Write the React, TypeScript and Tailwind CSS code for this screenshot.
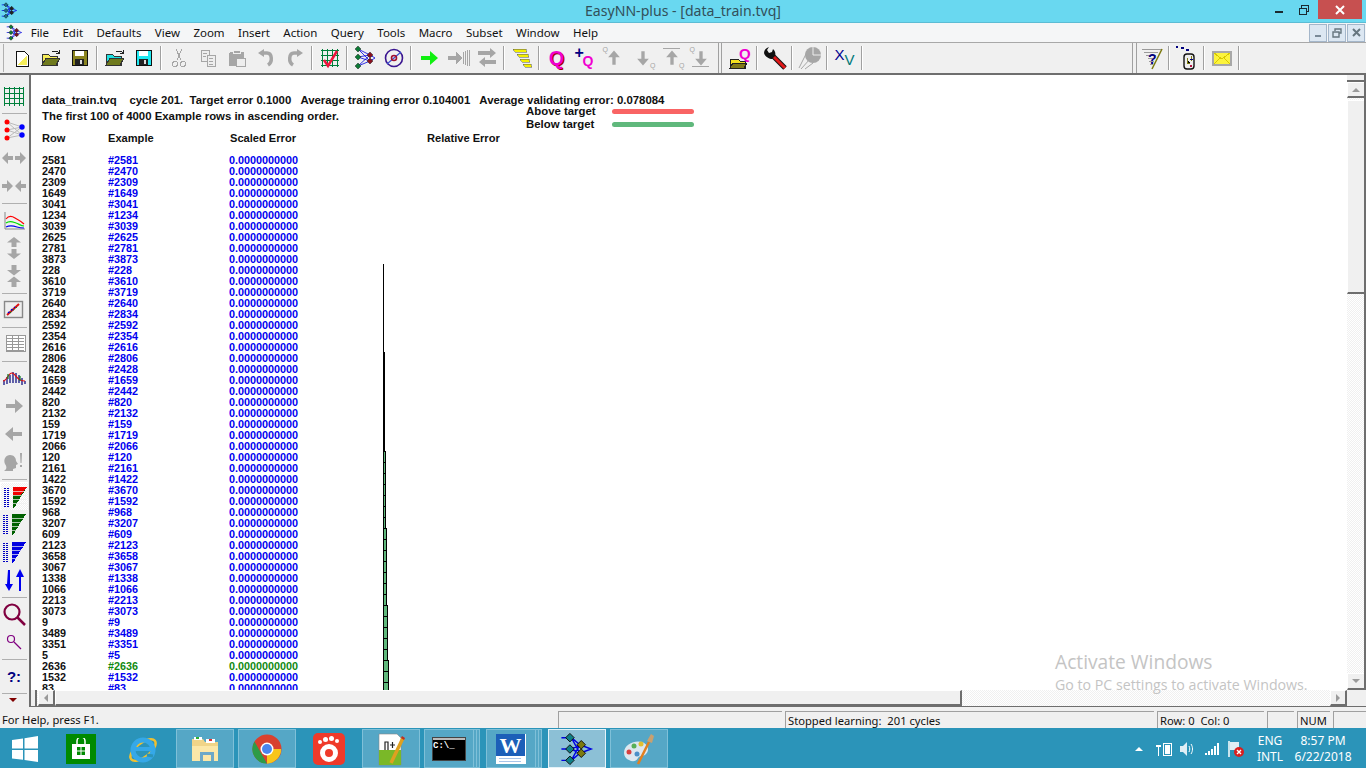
import type { ReactNode } from "react"

const GREY = "#a6a6a6"

const rows = [
  2581, 2470, 2309, 1649, 3041, 1234, 3039, 2625, 2781, 3873, 228, 3610, 3719, 2640, 2834, 2592, 2354, 2616, 2806, 2428,
  1659, 2442, 820, 2132, 159, 1719, 2066, 120, 2161, 1422, 3670, 1592, 968, 3207, 609, 2123, 3658, 3067, 1338, 1066,
  2213, 3073, 9, 3489, 3351, 5, 2636, 1532, 83,
]

const menus = ["File", "Edit", "Defaults", "View", "Zoom", "Insert", "Action", "Query", "Tools", "Macro", "Subset", "Window", "Help"]

const Svg = ({ children, s = 24 }: { children: ReactNode; s?: number }) => (
  <svg width={s} height={s} viewBox="0 0 24 24" shapeRendering="crispEdges">
    {children}
  </svg>
)

// little neural net, used in the title bar, menu bar and taskbar
const NetLogo = ({ size = 18, a = "#0f7f86", b = "#7d7a10" }: { size?: number; a?: string; b?: string }) => (
  <svg width={size} height={size} viewBox="0 0 24 24">
    <g stroke="#0000e0" strokeWidth="1" fill="none">
      <path d="M1 4h7M1 12h7M1 20h7M8 4l6 5M8 4l6 11M8 12l6-3M8 12l6 3M8 20l6-5M8 20l6-11M14 9l8 3-8 3" />
    </g>
    <g stroke="#111" strokeWidth="0.7">
      <path d="M7 1l3 3-3 3-3-3z" fill={a} />
      <path d="M7 9l3 3-3 3-3-3z" fill={a} />
      <path d="M7 17l3 3-3 3-3-3z" fill={a} />
      <path d="M15 6l3 3-3 3-3-3z" fill={b} />
      <path d="M15 12l3 3-3 3-3-3z" fill={b} />
    </g>
  </svg>
)

const NewDoc = () => (
  <Svg>
    <path d="M6 5h8l4 4v11H6z" fill="#fff" stroke="#111" />
    <path d="M7 19l10-9v9z" fill="#f5ee5a" />
  </Svg>
)
const Folder = ({ c }: { c: string }) => (
  <Svg>
    <path d="M3 8h6l2 2h7v9H3z" fill={c} stroke="#333" />
    <path d="M3 19l4-7h14l-4 7z" fill="#6f7a1e" stroke="#333" />
    <path d="M13 5h5l2 2M20 4v3h-3" fill="none" stroke="#222" />
  </Svg>
)
const Floppy = ({ c }: { c: string }) => (
  <Svg>
    <rect x="4" y="4" width="15" height="15" fill={c} stroke="#111" />
    <rect x="7" y="5" width="9" height="5" fill="#fff" />
    <rect x="7" y="13" width="9" height="6" fill="#222" />
    <rect x="12" y="14" width="2" height="4" fill="#ddd" />
  </Svg>
)
const Cut = () => (
  <Svg>
    <path d="M9 3l5 11M15 3l-5 11" stroke={GREY} fill="none" />
    <circle cx="8" cy="18" r="2.5" fill="none" stroke={GREY} />
    <circle cx="16" cy="18" r="2.5" fill="none" stroke={GREY} />
  </Svg>
)
const Copy = () => (
  <Svg>
    <path d="M5 4h8v11H5z" fill="#eee" stroke={GREY} />
    <path d="M11 9h8v11h-8z" fill="#eee" stroke={GREY} />
    <path d="M7 7h4M7 10h3M13 12h4M13 15h4M13 18h4" stroke={GREY} />
  </Svg>
)
const Paste = () => (
  <Svg>
    <rect x="4" y="6" width="15" height="14" rx="2" fill={GREY} />
    <rect x="8" y="4" width="7" height="3" fill={GREY} stroke="#eee" />
    <path d="M11 12h9v8h-9z" fill="#eee" stroke={GREY} />
  </Svg>
)
const Undo = ({ flip }: { flip?: boolean }) => (
  <svg width="24" height="24" viewBox="0 0 24 24" style={flip ? { transform: "scaleX(-1)" } : undefined}>
    <path d="M9 7h4c5 0 6 9 1 12" fill="none" stroke={GREY} strokeWidth="3.5" />
    <path d="M4 7l6-4v8z" fill={GREY} />
  </svg>
)
const GridCheck = () => (
  <Svg>
    <path d="M3 4h18M3 9h18M3 14h18M3 19h18M4 3v18M9 3v18M14 3v18M19 3v18" stroke="#00803c" fill="none" />
    <path d="M6 14l4 6 9-15" stroke="#f0143c" strokeWidth="2.5" fill="none" shapeRendering="auto" />
  </Svg>
)
const NetTool = () => (
  <svg width="24" height="24" viewBox="0 0 24 24">
    <path d="M5 3l12 6M5 3l12 12M5 11l12-2M5 11l12 4M5 20l12-5M5 20l12-11M17 9l5 3-5 3" stroke="#0000e0" fill="none" strokeWidth="0.8" />
    <path d="M5 0l3 3-3 3-3-3zM5 8l3 3-3 3-3-3zM5 17l3 3-3 3-3-3z" fill="#0d7a36" stroke="#222" strokeWidth="0.5" />
    <path d="M17 6l3 3-3 3-3-3zM17 12l3 3-3 3-3-3z" fill="#8a1020" stroke="#222" strokeWidth="0.5" />
  </svg>
)
const Compass = () => (
  <svg width="24" height="24" viewBox="0 0 24 24">
    <circle cx="12" cy="12" r="8.5" fill="none" stroke="#3a1590" strokeWidth="1.6" />
    <path d="M5 18L19 6" stroke="#3a50d0" strokeWidth="1.2" />
    <circle cx="12" cy="12" r="2.5" fill="none" stroke="#a01030" strokeWidth="1.6" />
  </svg>
)
const Arrow = ({ c = GREY, dir = 0, s = 24 }: { c?: string; dir?: number; s?: number }) => (
  <svg width={s} height={s} viewBox="0 0 24 24" style={{ transform: `rotate(${dir}deg)` }}>
    <path d="M4 10h9V5l8 7-8 7v-5H4z" fill={c} />
  </svg>
)
const ArrowLines = () => (
  <Svg>
    <path d="M2 10h8V6l6 6-6 6v-4H2z" fill={GREY} />
    <path d="M17 6v12M19 5v14M21 4v16M23 4v16" stroke={GREY} />
  </Svg>
)
const Swap = () => (
  <svg width="24" height="24" viewBox="0 0 24 24">
    <path d="M3 5h12V2l6 5-6 5V9H3zM21 14H10v-3l-6 5 6 5v-3h11z" fill={GREY} />
  </svg>
)
const Stairs = () => (
  <Svg>
    <path d="M3 3h13l1 3H5zM7 8h11l1 3H9zM10 13h9l1 3h-8zM13 18h8l1 3h-7z" fill="#f4f000" stroke="#555" strokeWidth="0.5" />
  </Svg>
)
const Q = () => (
  <div className="font-['Liberation_Sans',sans-serif] text-[20px] font-bold leading-none text-[#f000d0] [text-shadow:1px_1px_0_#900]">Q</div>
)
const PlusQ = () => (
  <div className="relative h-6 w-6 font-['Liberation_Sans',sans-serif] font-bold">
    <span className="absolute left-[1px] top-[-3px] text-[16px] leading-[20px] text-[#000080]">+</span>
    <span className="absolute left-[9px] top-[7px] text-[14px] leading-[16px] text-[#f000d0]">Q</span>
  </div>
)
const QArrow = ({ up, bar, qTop }: { up?: boolean; bar?: boolean; qTop?: boolean }) => (
  <div className="relative h-6 w-6">
    {bar && <div className={`absolute left-[2px] h-[1px] w-[17px] bg-[#a6a6a6] ${up ? "top-[2px]" : "top-[20px]"}`} />}
    <div className="absolute left-[1px] top-[2px]">
      <Arrow dir={up ? -90 : 90} s={20} />
    </div>
    <span className={`absolute font-['Liberation_Sans',sans-serif] text-[7px] leading-[8px] text-[#a6a6a6] ${qTop ? "left-0 top-0" : "bottom-0 right-0"}`}>Q</span>
  </div>
)
const OpenQ = () => (
  <Svg>
    <path d="M2 13h8l2 2h5v7H2z" fill="#f4e020" stroke="#222" />
    <path d="M2 22l3-5h14l-3 5z" fill="#807818" stroke="#222" />
    <text x="11" y="13" fontFamily="Liberation Sans" fontWeight="bold" fontSize="15" fill="#f000d0">Q</text>
  </Svg>
)
const Wrench = () => (
  <svg width="24" height="24" viewBox="0 0 24 24">
    <path d="M9 9l13 13" stroke="#111" strokeWidth="5" />
    <path d="M9 9l13 13" stroke="#e01818" strokeWidth="3" />
    <path d="M1 7c0-3 2-5 5-6L4 4l2 3 3-1 1-3c2 2 3 4 2 7l-3 3C7 13 2 11 1 7z" fill="#111" />
  </svg>
)
const Pie = () => (
  <svg width="24" height="24" viewBox="0 0 24 24">
    <circle cx="15" cy="9" r="8" fill={GREY} />
    <path d="M15 9V1M15 9h8" stroke="#eee" />
    <path d="M1 22L10 4M3 23L12 13M7 23L15 17" stroke={GREY} fill="none" />
  </svg>
)
const XV = () => (
  <div className="flex font-['Liberation_Sans',sans-serif] text-[15px] leading-none">
    <span className="mt-[-3px] text-[#000090]">X</span>
    <span className="mt-[2px] text-[#007878]">V</span>
  </div>
)
const HelpFilter = () => (
  <Svg>
    <path d="M2 3h20M4 6h14M6 9h10M8 12h6M9 15h5M10 18h3" stroke="#9a9a9a" />
    <path d="M22 3L12 23" stroke="#7d7a10" strokeWidth="1.5" shapeRendering="auto" />
    <text x="8" y="18" fontFamily="Liberation Sans" fontWeight="bold" fontSize="14" fill="#000080">?</text>
  </Svg>
)
const Clip = () => (
  <Svg>
    <path d="M1 1h2M6 2h3M11 4h3" stroke="#000080" strokeWidth="2" />
    <rect x="9" y="8" width="10" height="15" rx="3" fill="#eee" stroke="#111" strokeWidth="1.4" shapeRendering="auto" />
    <path d="M12 12v5h3M16 10v5" stroke="#7d7a10" />
    <path d="M15 13h3" stroke="#000080" />
    <rect x="15" y="19" width="2" height="2" fill="#b01040" />
  </Svg>
)
const Mail = () => (
  <Svg>
    <rect x="3" y="6" width="18" height="13" fill="#fcf43c" stroke="#a8a8a8" strokeWidth="1.4" />
    <path d="M4 7l8 6 8-6M4 18l6-6M20 18l-6-6" stroke="#d8c800" fill="none" />
  </Svg>
)

const Grid = () => (
  <Svg>
    <path d="M4 4h20M4 9h20M4 14h20M4 19h20M4 3v19M9 3v19M14 3v19M19 3v19M23 3v19" stroke="#00803c" fill="none" transform="translate(-2 0)" />
  </Svg>
)
const NetRB = () => (
  <svg width="24" height="24" viewBox="0 0 24 24">
    <path d="M5 4l15 5M5 4l15 13M5 12l15-3M5 12l15 5M5 20l15-3M5 20l15-11" stroke="#bbb" fill="none" />
    <circle cx="5" cy="4" r="2.5" fill="#f00" />
    <circle cx="5" cy="12" r="2.5" fill="#f00" />
    <circle cx="5" cy="20" r="2.5" fill="#f00" />
    <circle cx="20" cy="9" r="2.7" fill="#00f" />
    <circle cx="20" cy="17" r="2.7" fill="#00f" />
  </svg>
)
const HArrows = ({ inward }: { inward?: boolean }) => (
  <svg width="24" height="24" viewBox="0 0 24 24">
    {inward ? (
      <path d="M0 10h5V6l6 6-6 6v-4H0zM24 10h-5V6l-6 6 6 6v-4h5z" fill={GREY} />
    ) : (
      <path d="M11 10H6V6l-6 6 6 6v-4h5zM13 10h5V6l6 6-6 6v-4h-5z" fill={GREY} />
    )}
  </svg>
)
const VArrows = ({ inward }: { inward?: boolean }) => (
  <svg width="24" height="24" viewBox="0 0 24 24">
    {inward ? (
      <path d="M9.500 1h5v5H19l-7 5.500L5 6h4.500zM9.500 23h5v-5H19l-7-5.500L5 18h4.500z" fill={GREY} />
    ) : (
      <path d="M9.500 11h5V6.500H19L12 1 5 6.500h4.500zM9.500 13h5v4.500H19L12 23l-7-5.500h4.500z" fill={GREY} />
    )}
  </svg>
)
const Graph = () => (
  <svg width="24" height="24" viewBox="0 0 24 24">
    <path d="M3 4v17h20" stroke="#888" fill="none" />
    <path d="M4 11c3-4 6-3 9-1s6 3 9 6" stroke="#f00" strokeWidth="1.2" fill="none" />
    <path d="M4 15c4-3 7-1 10 0s5 3 8 3" stroke="#0d0" strokeWidth="1.2" fill="none" />
    <path d="M4 19c4-2 8-1 11 0s4 1 7 1" stroke="#00e" strokeWidth="1.2" fill="none" />
  </svg>
)
const Scatter = () => (
  <svg width="24" height="24" viewBox="0 0 24 24">
    <rect x="2.5" y="3.5" width="18" height="16" fill="#eee" stroke="#888" strokeWidth="1.4" />
    <path d="M5 17l12-11" stroke="#e01010" strokeWidth="2" />
    <path d="M6 15l7-6" stroke="#0000d0" strokeWidth="1.4" strokeDasharray="2 2" />
    <path d="M8 15l7-6" stroke="#008020" strokeWidth="1" strokeDasharray="2 2" />
  </svg>
)
const TableIcon = () => (
  <Svg>
    <rect x="4" y="3" width="19" height="16" fill="#fff" stroke="#999" />
    <path d="M5 6h17M5 9h17M5 12h17M5 15h17M5 18h17M10 3v16M16 3v16" stroke="#999" />
  </Svg>
)
const Hist = () => (
  <svg width="24" height="24" viewBox="0 0 24 24">
    <path d="M2 14v5M5 11v7M8 9v8M11 6v11M14 7v10M17 9v8M20 12v7M23 15v3" stroke="#00007a" strokeWidth="1.2" />
    <path d="M1 15c4 0 5-8 9-8s4 8 13 8" stroke="#e01010" strokeWidth="1.2" fill="none" />
    <path d="M6 8v5M18 10v5" stroke="#0a7a20" strokeWidth="1.2" />
  </svg>
)
const Head = () => (
  <svg width="24" height="24" viewBox="0 0 24 24">
    <path d="M2 21c3-2 3-4 1-7-2-5 1-9 5-9s6 3 6 6l2 3-2 1v3l-3 1v2z" fill={GREY} />
    <path d="M18 3h2l-.5 10h-1zM18 15h2v2h-2z" fill={GREY} />
  </svg>
)
const dots = "M1 3h6M1 5h6M1 7h6M1 9h6M1 11h6M1 13h6M1 15h6M1 17h6M1 19h6M1 21h6"
const gaps = "M10 6h14M10 10h14M10 14h14M10 18h14"
const Bars = ({ c, top }: { c: string; top?: string }) => (
  <Svg>
    <path d={dots} stroke="#0000c0" strokeDasharray="2 1" />
    <path d="M10 2h14L11 23h-1z" fill={c} />
    {top && <path d="M10 2h14l-6 8h-8z" fill={top} />}
    <path d={gaps} stroke="#f0f0f0" strokeOpacity="0.7" />
  </Svg>
)
const UpDown = () => (
  <svg width="24" height="24" viewBox="0 0 24 24">
    <path d="M6 2h2v14h3l-4 7-4-7h2zM17 9h2v14h-2zM18 1l4 8h-8z" fill="#0000f0" />
  </svg>
)
const Lens = ({ big }: { big?: boolean }) => (
  <svg width="24" height="24" viewBox="0 0 24 24">
    {big ? (
      <>
        <circle cx="10" cy="10" r="7.5" fill="none" stroke="#800040" strokeWidth="2.2" />
        <path d="M15 15l8 8" stroke="#800040" strokeWidth="2.5" />
      </>
    ) : (
      <>
        <circle cx="9" cy="9" r="3.5" fill="none" stroke="#800080" strokeWidth="1.2" />
        <path d="M12 12l7 7" stroke="#800080" strokeWidth="1.2" />
      </>
    )}
  </svg>
)
const HelpColon = () => (
  <div className="font-['Liberation_Sans',sans-serif] text-[15px] font-bold leading-none text-[#000080]">?:</div>
)

const topA: (ReactNode | "|")[] = [
  <NewDoc />, <Folder c="#f6ec58" />, <Floppy c="#8a8420" />, "|",
  <Folder c="#20e0e0" />, <Floppy c="#20e8f0" />, "|",
  <Cut />, <Copy />, <Paste />, <Undo />, <Undo flip />, "|",
  <GridCheck />, "|",
  <NetTool />, <Compass />, "|",
  <Arrow c="#10f010" />, <ArrowLines />, <Swap />, "|",
  <Stairs />, "|",
  <Q />, <PlusQ />, <QArrow up qTop />, <QArrow />, <QArrow up bar />, <QArrow bar qTop />,
]
const topB: (ReactNode | "|")[] = [<OpenQ />, "|", <Wrench />, "|", <Pie />, "|", <XV />, "|"]
const topC: (ReactNode | "|")[] = [<HelpFilter />, "|", <Clip />, "|", <Mail />, "|"]

const left: (ReactNode | "|")[] = [
  <Grid />, "|", <NetRB />, <HArrows />, <HArrows inward />, "|",
  <Graph />, <VArrows />, <VArrows inward />, "|",
  <Scatter />, "|", <TableIcon />, "|",
  <Hist />, <Arrow />, <Arrow dir={180} />, <Head />, "|",
  "active", <Bars c="#006000" />, <Bars c="#0000e0" />, <UpDown />, "|",
  <Lens big />, <Lens />, "|", <HelpColon />, "|",
]

const TopTools = ({ items }: { items: (ReactNode | "|")[] }) => (
  <>
    {items.map((it, i) =>
      it === "|" ? (
        <div key={i} className="flex h-[30px] w-[6px] items-center justify-center">
          <div className="h-[24px] w-[2px] border-l border-[#a0a0a0] bg-white" />
        </div>
      ) : (
        <div key={i} className="flex h-[30px] w-[29px] items-center justify-center">
          {it}
        </div>
      ),
    )}
  </>
)

const Thumb = ({ className = "", children }: { className?: string; children?: ReactNode }) => (
  <div className={`flex items-center justify-center border-b-2 border-l border-r-2 border-t border-b-[#6e6e6e] border-l-white border-r-[#6e6e6e] border-t-white bg-[#f0f0f0] ${className}`}>
    {children}
  </div>
)

const Panel = ({ className, children }: { className: string; children?: ReactNode }) => (
  <div className={`h-full whitespace-pre border-l border-t border-[#a0a0a0] pl-[2px] ${className}`}>{children}</div>
)

const TaskBtn = ({ w = "w-[58px]", active, stack, children }: { w?: string; active?: boolean; stack?: boolean; children: ReactNode }) => (
  <div className="flex h-[39px]">
    <div className={`flex h-full items-center justify-center border ${w} ${active ? "border-[#e4f2f8] bg-[#8cc0d6]" : "border-[#7fc0d8] bg-[#55a7c6]"}`}>
      {children}
    </div>
    {stack && <div className="h-full w-[3px] border-y border-r border-[#7fc0d8] bg-[#55a7c6]" />}
    {stack && <div className="h-full w-[3px] border-y border-r border-[#7fc0d8] bg-[#55a7c6]" />}
  </div>
)

export default function App() {
  return (
    <div className="relative flex h-[768px] w-[1366px] flex-col overflow-hidden bg-[#f0f0f0] font-['Noto_Sans',sans-serif]">
      {/* title bar */}
      <div className="relative flex h-[23px] shrink-0 items-center justify-center border-b border-[#5cbcd4] bg-[#69d8f0] text-[14.1px] text-[#32505a]">
        <div className="absolute left-[1px] top-[2px]">
          <NetLogo size={17} a="#1a6f8a" b="#222" />
        </div>
        EasyNN-plus - [data_train.tvq]
        <div className="absolute right-[4px] top-0 flex h-[19px] items-start">
          <div className="mr-[16px] mt-[11px] h-[2px] w-[8px] bg-[#1a2a30]" />
          <div className="relative mr-[9px] mt-[5px] h-[10px] w-[10px]">
            <div className="absolute left-[2px] top-0 h-[7px] w-[8px] border border-[#1a2a30]" />
            <div className="absolute bottom-0 left-0 h-[7px] w-[8px] border border-[#1a2a30] bg-[#69d8f0]" />
          </div>
          <div className="flex h-[19px] w-[44px] items-center justify-center bg-[#c75050]">
            <svg width="10" height="10" viewBox="0 0 10 10">
              <path d="M1 1l8 8M9 1l-8 8" stroke="#fff" strokeWidth="2" />
            </svg>
          </div>
        </div>
      </div>

      {/* menu bar */}
      <div className="flex h-[20px] shrink-0 items-center border-b border-[#a8a8a8] bg-[#f5f6f7] text-[11.5px] text-[#111]">
        <div className="ml-[6px] mr-[1px]">
          <NetLogo size={17} a="#0d7a36" b="#7a1020" />
        </div>
        {menus.map((m) => (
          <span key={m} className="px-[6.7px]">
            {m}
          </span>
        ))}
        <div className="ml-auto mr-[1px] flex gap-[1px]">
          {["min", "restore", "close"].map((b) => (
            <div key={b} className="flex h-[18px] w-[18px] items-center justify-center border border-[#a4b6ca] bg-[#dce7f2]">
              {b === "min" && <div className="mt-[6px] h-[2px] w-[6px] bg-[#7a8a98]" />}
              {b === "restore" && (
                <svg width="10" height="10" viewBox="0 0 10 10">
                  <path d="M3 3V1h6v4H7M1 4h6v5H1z" fill="none" stroke="#66767f" strokeWidth="1.4" />
                </svg>
              )}
              {b === "close" && (
                <svg width="9" height="9" viewBox="0 0 9 9">
                  <path d="M1 1l7 7M8 1L1 8" stroke="#66767f" strokeWidth="2" />
                </svg>
              )}
            </div>
          ))}
        </div>
      </div>

      {/* main toolbar */}
      <div className="flex h-[32px] shrink-0 items-center border-b-2 border-[#6e6e6e] bg-[#f0f0f0] pl-[3px]">
        <div className="mr-[3px] h-[28px] w-[1px] bg-[#b0b0b0]" />
        <TopTools items={topA} />
        <div className="ml-[1px] mr-[2px] h-[30px] w-[2px] border-r border-[#a0a0a0]" />
        <div className="mr-[2px] h-[30px] w-[2px] border-l border-[#a0a0a0]" />
        <TopTools items={topB} />
        <div className="flex-1" />
        <div className="mr-[3px] h-[30px] w-[1px] bg-[#a0a0a0]" />
        <div className="h-[30px] w-[1px] bg-[#a0a0a0]" />
        <TopTools items={topC} />
        <div className="w-[124px]" />
      </div>

      {/* client area */}
      <div className="flex h-[632px] shrink-0">
        <div className="flex w-[31px] shrink-0 flex-col overflow-hidden border-r-2 border-[#6e6e6e] pt-[7px]">
          {left.map((it, i) =>
            it === "|" ? (
              <div key={i} className="flex h-[6px] shrink-0 items-center px-[2px]">
                <div className="h-[1px] w-full bg-[#b0b0b0]" />
              </div>
            ) : it === "active" ? (
              <div key={i} className="flex h-[28px] w-[28px] shrink-0 items-center justify-center border-l border-t border-white bg-[repeating-conic-gradient(#f0f0f0_0_25%,#fff_0_50%)] bg-[length:2px_2px]">
                <Bars c="#006000" top="#f00000" />
              </div>
            ) : (
              <div key={i} className="flex h-[28px] w-[28px] shrink-0 items-center justify-center">
                {it}
              </div>
            ),
          )}
          <div className="mt-[2px] flex justify-center pr-[3px]">
            <div className="h-0 w-0 border-x-[4px] border-t-[4px] border-x-transparent border-t-[#800000]" />
          </div>
        </div>

        <div className="flex min-w-0 flex-1 flex-col">
          <div className="flex h-[615px] min-h-0">
            {/* report */}
            <div className="min-w-0 flex-1 overflow-hidden bg-white pl-[11px] pt-[19px] font-['Liberation_Sans',sans-serif] text-[11.4px] font-bold leading-[11px] text-[#111]">
              <div className="flex h-[12px] items-center whitespace-pre">data_train.tvq{"    "}cycle 201.{"  "}Target error 0.1000{"   "}Average training error 0.104001{"   "}Average validating error: 0.078084</div>
              <div className="flex h-[26px]">
                <div className="w-[484px] pt-[5px]">The first 100 of 4000 Example rows in ascending order.</div>
                <div className="flex w-[168px] flex-col gap-[2px]">
                  <div className="flex h-[11px] items-center justify-between">
                    Above target
                    <div className="h-[5px] w-[82px] rounded-full bg-[#f96464]" />
                  </div>
                  <div className="flex h-[11px] items-center justify-between">
                    Below target
                    <div className="h-[5px] w-[82px] rounded-full bg-[#60b87c]" />
                  </div>
                </div>
              </div>
              <div className="grid h-[23px] grid-cols-[66px_122px_197px_1fr] pt-[1px] text-[11.1px]">
                <div>Row</div>
                <div>Example</div>
                <div>Scaled Error</div>
                <div>Relative Error</div>
              </div>
              {rows.map((r, i) => {
                const green = r === 2636
                const w = i < 10 ? 0 : i < 18 ? 1 : i < 27 ? 2 : i < 34 ? 3 : i < 41 ? 4 : i < 46 ? 5 : 6
                return (
                  <div key={r} className="grid h-[11px] grid-cols-[66px_121px_154px_1fr] text-[10.8px]">
                    <div>{r}</div>
                    <div className={green ? "text-[#108a10]" : "text-[#0000f0]"}>#{r}</div>
                    <div className={green ? "text-[#108a10]" : "text-[#0000f0]"}>0.0000000000</div>
                    <div className="h-[11px]">
                      {w > 0 &&
                        (w < 3 ? (
                          <div className="-mt-[1px] h-full bg-black" style={{ width: w }} />
                        ) : (
                          <div className="-mt-[1px] h-full border-x border-t border-black bg-[#60b87c]" style={{ width: w }} />
                        ))}
                    </div>
                  </div>
                )
              })}
            </div>
            {/* vertical scroll bar */}
            <div className="flex w-[19px] shrink-0 flex-col border-r-2 border-[#6e6e6e] bg-[repeating-conic-gradient(#f0f0f0_0_25%,#fff_0_50%)] bg-[length:2px_2px]">
              <div className="h-[7px] shrink-0 border-b-2 border-[#6e6e6e] bg-[#f0f0f0]" />
              <Thumb className="h-[16px] shrink-0 !border-r-0">
                <div className="h-0 w-0 border-x-[4px] border-b-[4px] border-x-transparent border-b-[#9a9a9a]" />
              </Thumb>
              <div className="h-[2px] shrink-0" />
              <Thumb className="h-[194px] shrink-0 !border-r-0" />
              <div className="flex-1" />
              <Thumb className="h-[17px] shrink-0 !border-r-0">
                <div className="h-0 w-0 border-x-[4px] border-t-[4px] border-x-transparent border-t-[#9a9a9a]" />
              </Thumb>
            </div>
          </div>
          {/* horizontal scroll bar */}
          <div className="flex h-[16px] shrink-0 bg-[repeating-conic-gradient(#f0f0f0_0_25%,#fff_0_50%)] bg-[length:2px_2px]">
            <div className="w-[6px] shrink-0 border-r-2 border-[#6e6e6e] bg-[#f0f0f0]" />
            <div className="w-[1px] shrink-0" />
            <Thumb className="w-[17px] shrink-0">
              <div className="h-0 w-0 border-y-[4px] border-r-[4px] border-y-transparent border-r-[#9a9a9a]" />
            </Thumb>
            <Thumb className="w-[907px] shrink-0" />
            <div className="flex-1" />
            <Thumb className="w-[17px] shrink-0">
              <div className="h-0 w-0 border-y-[4px] border-l-[4px] border-y-transparent border-l-[#9a9a9a]" />
            </Thumb>
            <div className="w-[19px] shrink-0 bg-[#f0f0f0]" />
          </div>
          <div className="h-[1px] shrink-0 bg-[#6e6e6e]" />
        </div>
      </div>

      {/* status bar */}
      <div className="flex h-[21px] shrink-0 items-end bg-[#f0f0f0] text-[11.2px] leading-[17px] text-[#111]">
        <div className="flex h-[17px] w-full items-start gap-[3px]">
          <div className="h-full w-[555px] pl-[2px]">For Help, press F1.</div>
          <Panel className="w-[224px]" />
          <Panel className="w-[369px]">Stopped learning:{"  "}201 cycles</Panel>
          <Panel className="w-[107px]">Row: 0{"  "}Col: 0</Panel>
          <Panel className="w-[27px]" />
          <Panel className="w-[33px]">NUM</Panel>
          <Panel className="flex-1" />
        </div>
      </div>

      {/* taskbar */}
      <div className="flex h-[40px] shrink-0 items-end bg-[#2b94b9]">
        <div className="flex h-[39px] w-[66px] items-center pl-[12px]">
          <svg width="26" height="26" viewBox="0 0 26 26">
            <path d="M0 4l11-1.500V12.500H0zM12.500 2.300L26 0v12.500H12.500zM0 14h11v9.800L0 22.500zM12.500 14H26v12l-13.500-2z" fill="#fff" />
          </svg>
        </div>
        <div className="flex h-[39px] w-[30px] items-center justify-center">
          <div className="flex h-[30px] w-[30px] items-center justify-center bg-[#008a00]">
            <svg width="20" height="22" viewBox="0 0 20 22">
              <path d="M6 6V3a4 4 0 018 0v3" fill="none" stroke="#fff" strokeWidth="1.5" />
              <path d="M1 6h18v15H1z" fill="#fff" />
              <path d="M6 9h3.500v3.500H6zM10.500 9H14v3.500h-3.500zM6 13.500h3.500V17H6zM10.500 13.500H14V17h-3.500z" fill="#008a00" />
            </svg>
          </div>
        </div>
        <div className="flex h-[39px] w-[80px] items-center justify-center pl-[14px]">
          <svg width="32" height="32" viewBox="0 0 32 32">
            <ellipse cx="16" cy="17" rx="15" ry="7" fill="none" stroke="#f0c030" strokeWidth="2.5" transform="rotate(-38 16 17)" />
            <circle cx="16" cy="17" r="10" fill="none" stroke="#35a8e8" strokeWidth="5" />
            <path d="M8 16h17" stroke="#35a8e8" strokeWidth="4" />
            <path d="M20 22l6 1" stroke="#2b94b9" strokeWidth="3" />
          </svg>
        </div>
        <div className="mr-[4px]">
          <TaskBtn>
            <svg width="30" height="30" viewBox="0 0 30 30">
              <path d="M2 5h11l2 3h13v19H2z" fill="#f0d488" />
              <path d="M4 3h8v3H4zM16 5h9v4h-9z" fill="#fff" />
              <path d="M6 3h3v2H6z" fill="#30b030" />
              <path d="M19 5h3v2h-3z" fill="#e03030" />
              <path d="M2 12h26v15H2z" fill="#fbe7a8" />
              <path d="M10 18h14v9h-3v-6h-8v6h-3z" fill="#6ca8c8" />
            </svg>
          </TaskBtn>
        </div>
        <TaskBtn>
          <svg width="30" height="30" viewBox="0 0 30 30">
            <circle cx="15" cy="15" r="14.500" fill="#d8412f" />
            <path d="M15 15h14a14.500 14.500 0 01-14 14.500z" fill="#f7c51a" />
            <path d="M15 29.500A14.500 14.500 0 012.500 7.500L9 19z" fill="#2e9b47" />
            <path d="M15 29.500l7-11 7-3.500a14.500 14.500 0 01-14 14.500z" fill="#f7c51a" />
            <circle cx="15" cy="15" r="6.500" fill="#fff" />
            <circle cx="15" cy="15" r="5" fill="#4a85ee" />
          </svg>
        </TaskBtn>
        <div className="flex h-[39px] w-[66px] items-center justify-center">
          <div className="relative h-[32px] w-[32px] rounded-[5px] bg-[#ef3a2a]">
            <div className="absolute left-[7px] top-[11px] h-[18px] w-[18px] rounded-full border-[5px] border-white bg-[#ef3a2a]" />
            <div className="absolute left-[5px] top-[7px] h-[4px] w-[4px] rounded-full bg-white" />
            <div className="absolute left-[10px] top-[4px] h-[5px] w-[5px] rounded-full bg-white" />
            <div className="absolute left-[16px] top-[3px] h-[5px] w-[5px] rounded-full bg-white" />
            <div className="absolute left-[22px] top-[6px] h-[4px] w-[4px] rounded-full bg-white" />
          </div>
        </div>
        <div className="mr-[4px]">
          <TaskBtn>
            <svg width="32" height="34" viewBox="0 0 32 34">
              <path d="M4 2h18l4 4v27H4z" fill="#fff" stroke="#888" strokeWidth="0.6" />
              <path d="M4 18h22v15H4z" fill="#7ab828" />
              <path d="M10 18v-8h3v8M15 13h5M17.500 10v6" stroke="#222" fill="none" strokeWidth="1.2" />
              <path d="M16 31L28 6" stroke="#e0a020" strokeWidth="3.500" />
              <path d="M27 4l3 2-1 2-3-2z" fill="#c03020" />
            </svg>
          </TaskBtn>
        </div>
        <div className="mr-[6px]">
          <TaskBtn w="w-[50px]" stack>
            <div className="relative h-[24px] w-[34px] border border-[#444] bg-black font-['Liberation_Mono',monospace] text-[9px] font-bold leading-[12px] text-white">
              <div className="h-[2px] bg-[#bbb]" />
              C:\_
            </div>
          </TaskBtn>
        </div>
        <div className="mr-[6px]">
          <TaskBtn w="w-[50px]" stack>
            <div className="relative h-[30px] w-[30px] bg-white">
              <div className="absolute left-0 top-0 h-[22px] w-[29px] bg-[#1c5fb8] text-center font-['Liberation_Serif',serif] text-[22px] font-bold leading-[24px] text-white">W</div>
              <div className="absolute bottom-[2px] left-[3px] h-[1px] w-[22px] bg-[#a8c4e8]" />
              <div className="absolute bottom-[5px] left-[3px] h-[1px] w-[22px] bg-[#a8c4e8]" />
            </div>
          </TaskBtn>
        </div>
        <div className="mr-[4px]">
          <TaskBtn active>
            <NetLogo size={34} />
          </TaskBtn>
        </div>
        <TaskBtn>
          <svg width="34" height="34" viewBox="0 0 34 34">
            <path d="M2 21c0-9 11-13 18-11 6 2 8 8 4 12-3 3-6 1-8 4-2 4-6 4-9 2-3-1-5-4-5-7z" fill="#dce8f0" />
            <circle cx="7" cy="20" r="2.500" fill="#d84040" />
            <circle cx="12" cy="14" r="2.500" fill="#58b058" />
            <circle cx="19" cy="12" r="2.500" fill="#e0c030" />
            <circle cx="15" cy="22" r="2.500" fill="#4a90c8" />
            <path d="M16 32L27 10" stroke="#e08020" strokeWidth="2.500" />
            <path d="M25 9l4-7 3 2-2 7z" fill="#c8a070" />
          </svg>
        </TaskBtn>

        <div className="flex-1" />
        {/* tray */}
        <div className="flex h-[39px] items-center text-[12px] leading-[16px] text-white">
          <div className="mr-[13px] mt-[1px] h-0 w-0 border-x-[4px] border-b-[4px] border-x-transparent border-b-white" />
          <svg className="mr-[7px]" width="16" height="16" viewBox="0 0 16 16">
            <path d="M1 1v3M4 1v3M0 4h5v2H3v9H2V6H0z" fill="#fff" />
            <rect x="7.500" y="2.500" width="8" height="12" fill="none" stroke="#fff" />
            <rect x="9" y="4" width="5" height="9" fill="#fff" />
          </svg>
          <svg className="mr-[9px]" width="16" height="16" viewBox="0 0 16 16">
            <path d="M1 5h3l4-4v14l-4-4H1z" fill="#dfeef5" />
            <path d="M10 5c1 2 1 4 0 6M12 3c2 3 2 7 0 10" stroke="#fff" fill="none" />
          </svg>
          <svg className="mr-[7px]" width="16" height="16" viewBox="0 0 16 16">
            <path d="M1 12h2v2H1zM4 10h2v4H4zM7 8h2v6H7zM10 5h2v9h-2zM13 2h2v12h-2z" fill="#fff" />
          </svg>
          <svg className="mr-[12px]" width="18" height="18" viewBox="0 0 18 18">
            <path d="M2 1v16" stroke="#fff" strokeWidth="1.5" />
            <path d="M3 2h9v8H3z" fill="#dfeef5" />
            <circle cx="12" cy="12" r="5" fill="#d82020" />
            <path d="M10 10l4 4M14 10l-4 4" stroke="#fff" strokeWidth="1.4" />
          </svg>
          <div className="mr-[12px] flex w-[26px] flex-col items-center">
            <span>ENG</span>
            <span>INTL</span>
          </div>
          <div className="mr-[15px] flex w-[56px] flex-col items-center">
            <span>8:57 PM</span>
            <span>6/22/2018</span>
          </div>
        </div>
      </div>

      {/* watermark on top of everything */}
      <div className="pointer-events-none absolute left-[1055px] top-[649px] font-['Open_Sans',sans-serif] leading-none text-[#c4c4c4]">
        <div className="text-[19.2px] leading-[26px]">Activate Windows</div>
        <div className="text-[14.2px] leading-[20px]">Go to PC settings to activate Windows.</div>
      </div>
    </div>
  )
}
